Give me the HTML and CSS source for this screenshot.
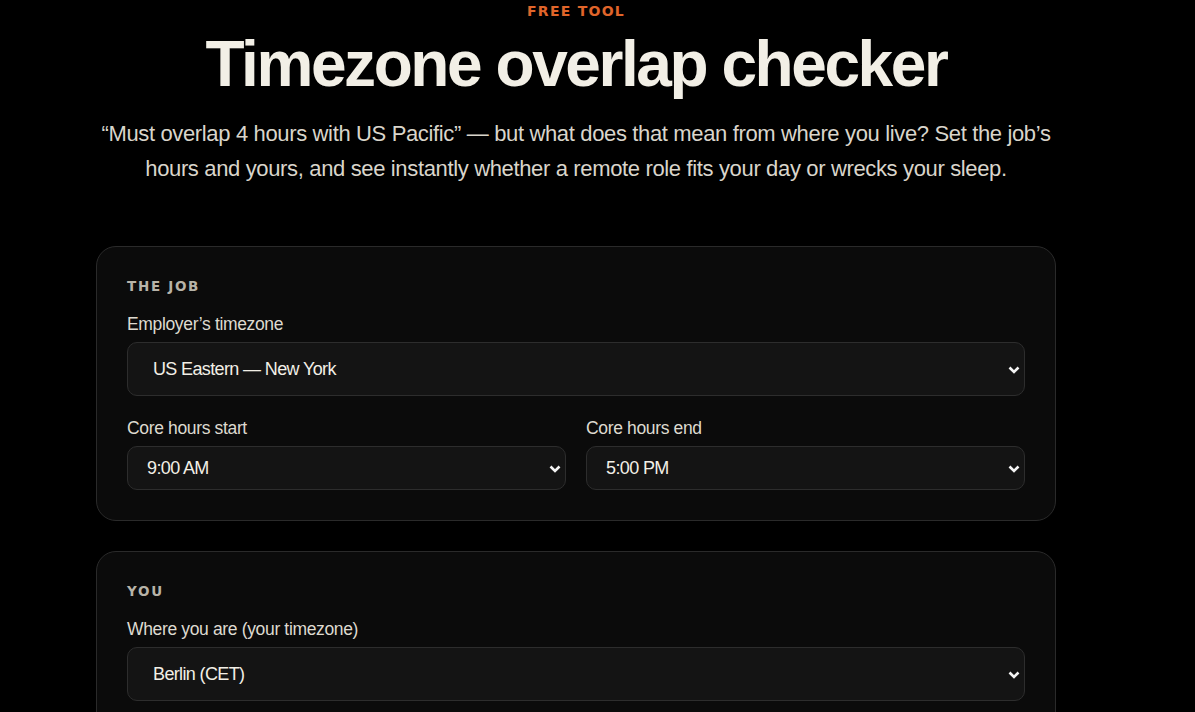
FILE: index.html
```html
<!DOCTYPE html>
<html lang="en">
<head>
<meta charset="utf-8">
<title>Timezone overlap checker</title>
<link rel="stylesheet" href="styles.css">
</head>
<body>
<div class="page">
  <main class="container">
    <header class="hero">
      <p class="eyebrow">FREE TOOL</p>
      <h1 class="title">Timezone overlap checker</h1>
      <p class="lede">“Must overlap 4 hours with US Pacific” — but what does that mean from where you live? Set the job’s hours and yours, and see instantly whether a remote role fits your day or wrecks your sleep.</p>
    </header>

    <section class="card">
      <h2 class="card-title">THE JOB</h2>
      <div class="field">
        <label class="label" for="emp-tz">Employer’s timezone</label>
        <div class="select-wrap">
          <select id="emp-tz" class="select select-lg">
            <option>US Eastern — New York</option>
            <option>US Pacific — Los Angeles</option>
          </select>
          <svg class="chev" viewBox="0 0 12 8" aria-hidden="true"><path d="M1.5 1.5 L6 6 L10.5 1.5"/></svg>
        </div>
      </div>
      <div class="row">
        <div class="field">
          <label class="label" for="start">Core hours start</label>
          <div class="select-wrap">
            <select id="start" class="select"><option>9:00 AM</option></select>
            <svg class="chev" viewBox="0 0 12 8" aria-hidden="true"><path d="M1.5 1.5 L6 6 L10.5 1.5"/></svg>
          </div>
        </div>
        <div class="field">
          <label class="label" for="end">Core hours end</label>
          <div class="select-wrap">
            <select id="end" class="select"><option>5:00 PM</option></select>
            <svg class="chev" viewBox="0 0 12 8" aria-hidden="true"><path d="M1.5 1.5 L6 6 L10.5 1.5"/></svg>
          </div>
        </div>
      </div>
    </section>

    <section class="card">
      <h2 class="card-title">YOU</h2>
      <div class="field">
        <label class="label" for="my-tz">Where you are (your timezone)</label>
        <div class="select-wrap">
          <select id="my-tz" class="select select-lg"><option>Berlin (CET)</option></select>
          <svg class="chev" viewBox="0 0 12 8" aria-hidden="true"><path d="M1.5 1.5 L6 6 L10.5 1.5"/></svg>
        </div>
      </div>
    </section>
  </main>
</div>
</body>
</html>
```

FILE: styles.css
```css
* { box-sizing: border-box; }

html, body {
  margin: 0;
  background: #000;
  color: #e9e6dd;
  font-family: "Liberation Sans", Arial, sans-serif;
}

.page {
  padding: 0 139px 0 96px;
}

.container {
  max-width: 960px;
  margin: 0 auto;
}

.hero {
  text-align: center;
  padding-bottom: 60px;
}

.eyebrow {
  margin: 0;
  padding-top: 2px;
  font-family: "DejaVu Sans", sans-serif;
  font-weight: 700;
  font-size: 14px;
  line-height: 18px;
  letter-spacing: 0.09em;
  color: #e0652a;
}

.title {
  margin: 6px 0 0;
  font-size: 64px;
  line-height: 76px;
  font-weight: 700;
  letter-spacing: -0.038em;
  color: #f2efe6;
}

.lede {
  margin: 14px -4px 0;
  font-size: 22px;
  line-height: 35px;
  letter-spacing: -0.016em;
  color: #d9d5cb;
}

.card {
  background: #0b0b0b;
  border: 1px solid #2a2a2a;
  border-radius: 20px;
  padding: 30px;
  margin-bottom: 30px;
}

.card-title {
  margin: 0 0 18px;
  font-family: "DejaVu Sans", sans-serif;
  font-weight: 700;
  font-size: 13.5px;
  line-height: 18px;
  letter-spacing: 0.125em;
  color: #b7b3a8;
}

.field {
  display: flex;
  flex-direction: column;
  gap: 7px;
  min-width: 0;
}

.label {
  font-size: 17.5px;
  line-height: 22px;
  letter-spacing: -0.02em;
  color: #dedad0;
}

.row {
  display: grid;
  grid-template-columns: 1fr 1fr;
  gap: 20px;
  margin-top: 21px;
}

.select-wrap {
  position: relative;
}

.select {
  display: block;
  width: 100%;
  height: 44px;
  padding: 0 30px 0 19px;
  appearance: none;
  -webkit-appearance: none;
  background-color: #141414;
  color: #f2efe6;
  border: 1px solid #2d2d2d;
  border-radius: 10px;
  font-family: "Liberation Sans", Arial, sans-serif;
  font-size: 18px;
  letter-spacing: -0.035em;
}

.select-lg {
  height: 54px;
  padding-left: 25px;
}

.chev {
  position: absolute;
  right: 5px;
  top: 50%;
  width: 12px;
  height: 8px;
  margin-top: -3px;
  fill: none;
  stroke: #f4f4f4;
  stroke-width: 2.6;
  stroke-linejoin: miter;
  pointer-events: none;
}
```
